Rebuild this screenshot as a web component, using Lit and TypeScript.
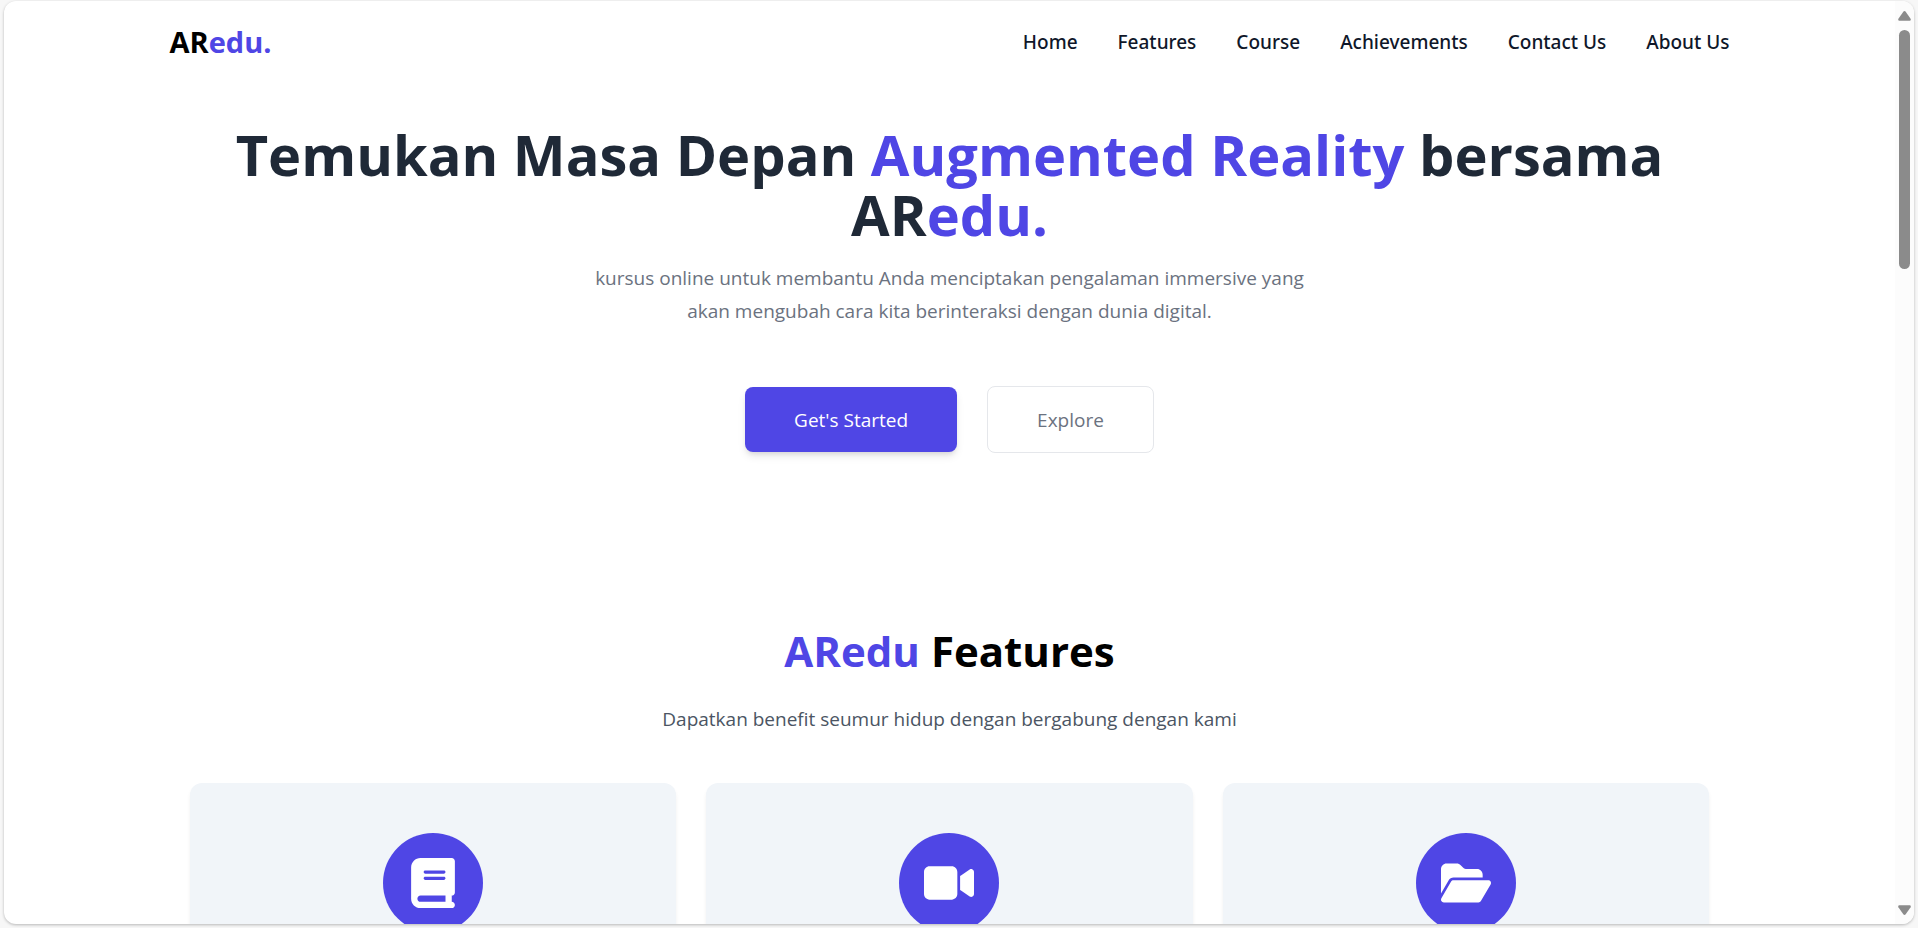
import { LitElement, html, css, svg } from "lit";
import { customElement } from "lit/decorators.js";

const links = ["Home", "Features", "Course", "Achievements", "Contact Us", "About Us"];

const icons = [
  {
    label: "Book",
    box: "0 0 448 512",
    path: "M96 0C43 0 0 43 0 96V416c0 53 43 96 96 96H384h32c17.7 0 32-14.3 32-32s-14.3-32-32-32V384c17.7 0 32-14.3 32-32V32c0-17.7-14.3-32-32-32H384 96zm0 384H352v64H96c-17.7 0-32-14.3-32-32s14.3-32 32-32zm32-240c0-8.8 7.2-16 16-16H336c8.8 0 16 7.2 16 16s-7.2 16-16 16H144c-8.8 0-16-7.2-16-16zm16 48H336c8.8 0 16 7.2 16 16s-7.2 16-16 16H144c-8.8 0-16-7.2-16-16s7.2-16 16-16z",
  },
  {
    label: "Video",
    box: "0 0 576 512",
    path: "M0 128C0 92.7 28.7 64 64 64H320c35.3 0 64 28.7 64 64V384c0 35.3-28.7 64-64 64H64c-35.3 0-64-28.7-64-64V128zM559.1 99.8c10.4 5.6 16.9 16.4 16.9 28.2V384c0 11.8-6.5 22.6-16.9 28.2s-23 5-32.9-1.6l-96-64L416 337.1V320 192 174.9l14.2-9.5 96-64c9.8-6.5 22.4-7.2 32.9-1.6z",
  },
  {
    label: "Folder",
    box: "0 0 576 512",
    path: "M88.7 223.8L0 375.8V96C0 60.7 28.7 32 64 32H181.5c17 0 33.3 6.7 45.3 18.7l26.5 26.5c12 12 28.3 18.7 45.3 18.7H416c35.3 0 64 28.7 64 64v32H144c-22.8 0-43.8 12.1-55.3 31.8zm27.6 16.1C122.1 230 132.6 224 144 224H544c11.5 0 22 6.1 27.7 16.1s5.7 22.2-.1 32.1l-112 192C453.9 474 443.4 480 432 480H32c-11.5 0-22-6.1-27.7-16.1s-5.7-22.2 .1-32.1l112-192z",
  },
];

@customElement("app-root")
export class AppRoot extends LitElement {
  static styles = css`
    :host {
      display: block;
      box-sizing: border-box;
      height: 100vh;
      padding: 1px 4px 4px;
      background: #f7f7f7;
      font-family: "Open Sans", "Noto Sans", sans-serif;
      font-size: 19px;
      color: #000;
    }
    * {
      box-sizing: border-box;
    }
    h1,
    h2,
    p {
      margin: 0;
    }
    .window {
      display: flex;
      height: 100%;
      overflow: hidden;
      border-radius: 12px;
      background: #fff;
      box-shadow: 0 1px 3px rgba(0, 0, 0, 0.26);
    }
    .page {
      flex: 1;
      min-width: 0;
      overflow: hidden;
    }
    .container {
      max-width: 1600px;
      margin: 0 auto;
      padding: 0 20px;
    }
    .accent {
      color: #4f46e5;
    }
    .bar {
      display: flex;
      align-items: center;
      justify-content: space-between;
      height: 82px;
    }
    .logo {
      color: #000;
      font-size: 29px;
      font-weight: 700;
      line-height: 40px;
      text-decoration: none;
    }
    .links {
      display: flex;
      gap: 40px;
    }
    .link {
      color: #0f172a;
      font-family: "Noto Sans", "Open Sans", sans-serif;
      font-weight: 500;
      line-height: 28px;
      text-decoration: none;
    }
    .hero {
      padding-top: 41px;
      text-align: center;
    }
    .title {
      color: #1f2937;
      font-size: 56px;
      font-weight: 700;
      line-height: 60px;
    }
    .lead {
      max-width: 720px;
      margin: 18px auto 0;
      color: #6b7280;
      line-height: 33px;
    }
    .actions {
      display: flex;
      align-items: center;
      justify-content: center;
      gap: 30px;
      margin-top: 58px;
    }
    .button {
      padding: 19px 49px 17px;
      border: 0;
      border-radius: 8px;
      font: inherit;
      line-height: 29px;
    }
    .primary {
      background: #4f46e5;
      color: #fff;
      box-shadow: 0 5px 8px -1px rgba(0, 0, 0, 0.1), 0 3px 5px -2px rgba(0, 0, 0, 0.1);
    }
    .outline {
      border: 1px solid #e5e7eb;
      background: #fff;
      color: #6b7280;
    }
    .features {
      padding-top: 173px;
      text-align: center;
    }
    .heading {
      font-size: 42px;
      font-weight: 700;
      line-height: 50px;
    }
    .sub {
      margin-top: 28px;
      color: #4b5563;
      line-height: 30px;
    }
    .cards {
      display: grid;
      grid-template-columns: repeat(3, 1fr);
      gap: 30px;
      margin-top: 49px;
      padding: 0 20px;
    }
    .card {
      display: flex;
      justify-content: center;
      min-height: 300px;
      padding-top: 50px;
      border-radius: 12px;
      background: #f1f5f9;
      box-shadow: 0 4px 4px rgba(0, 0, 0, 0.06);
    }
    .badge {
      display: flex;
      align-items: center;
      justify-content: center;
      width: 100px;
      height: 100px;
      border-radius: 50%;
      background: #4f46e5;
    }
    .icon {
      width: 50px;
      height: 50px;
      fill: #fff;
    }
    .scroll {
      display: flex;
      flex-direction: column;
      align-items: center;
      width: 19px;
      padding: 10px 0 9px;
      background: #fcfcfc;
    }
    .arrow {
      width: 13px;
      height: 10px;
      fill: #8b8b8b;
    }
    .track {
      flex: 1;
      padding-top: 9px;
    }
    .thumb {
      width: 11px;
      height: 27.3%;
      border-radius: 6px;
      background: #8b8b8b;
    }
  `;

  render() {
    return html`
      <div class="window">
        <div class="page">
          <header class="container bar">
            <a class="logo" href="#">AR<span class="accent">edu.</span></a>
            <nav class="links">
              ${links.map((name) => html`<a class="link" href="#">${name}</a>`)}
            </nav>
          </header>
          <main>
            <section class="container hero">
              <h1 class="title">
                Temukan Masa Depan <span class="accent">Augmented Reality</span> bersama
                AR<span class="accent">edu.</span>
              </h1>
              <p class="lead">
                kursus online untuk membantu Anda menciptakan pengalaman immersive yang akan
                mengubah cara kita berinteraksi dengan dunia digital.
              </p>
              <div class="actions">
                <button class="button primary">Get's Started</button>
                <button class="button outline">Explore</button>
              </div>
            </section>
            <section class="container features">
              <h2 class="heading"><span class="accent">ARedu</span> Features</h2>
              <p class="sub">Dapatkan benefit seumur hidup dengan bergabung dengan kami</p>
              <div class="cards">
                ${icons.map(
                  (icon) => html`
                    <article class="card">
                      <span class="badge">
                        <svg class="icon" viewBox=${icon.box} role="img" aria-label=${icon.label}>
                          ${svg`<path d=${icon.path}></path>`}
                        </svg>
                      </span>
                    </article>
                  `
                )}
              </div>
            </section>
          </main>
        </div>
        <div class="scroll" aria-hidden="true">
          <svg class="arrow" viewBox="0 0 13 10"><path d="M5.3.7Q6.5-.6 7.7.7L12.6 7.7Q13.3 9.6 11.6 9.8H1.4Q-.3 9.6.4 7.7Z"></path></svg>
          <div class="track"><div class="thumb"></div></div>
          <svg class="arrow" viewBox="0 0 13 10"><path d="M5.3 9.3Q6.5 10.6 7.7 9.3L12.6 2.3Q13.3.4 11.6.2H1.4Q-.3.4.4 2.3Z"></path></svg>
        </div>
      </div>
    `;
  }
}
